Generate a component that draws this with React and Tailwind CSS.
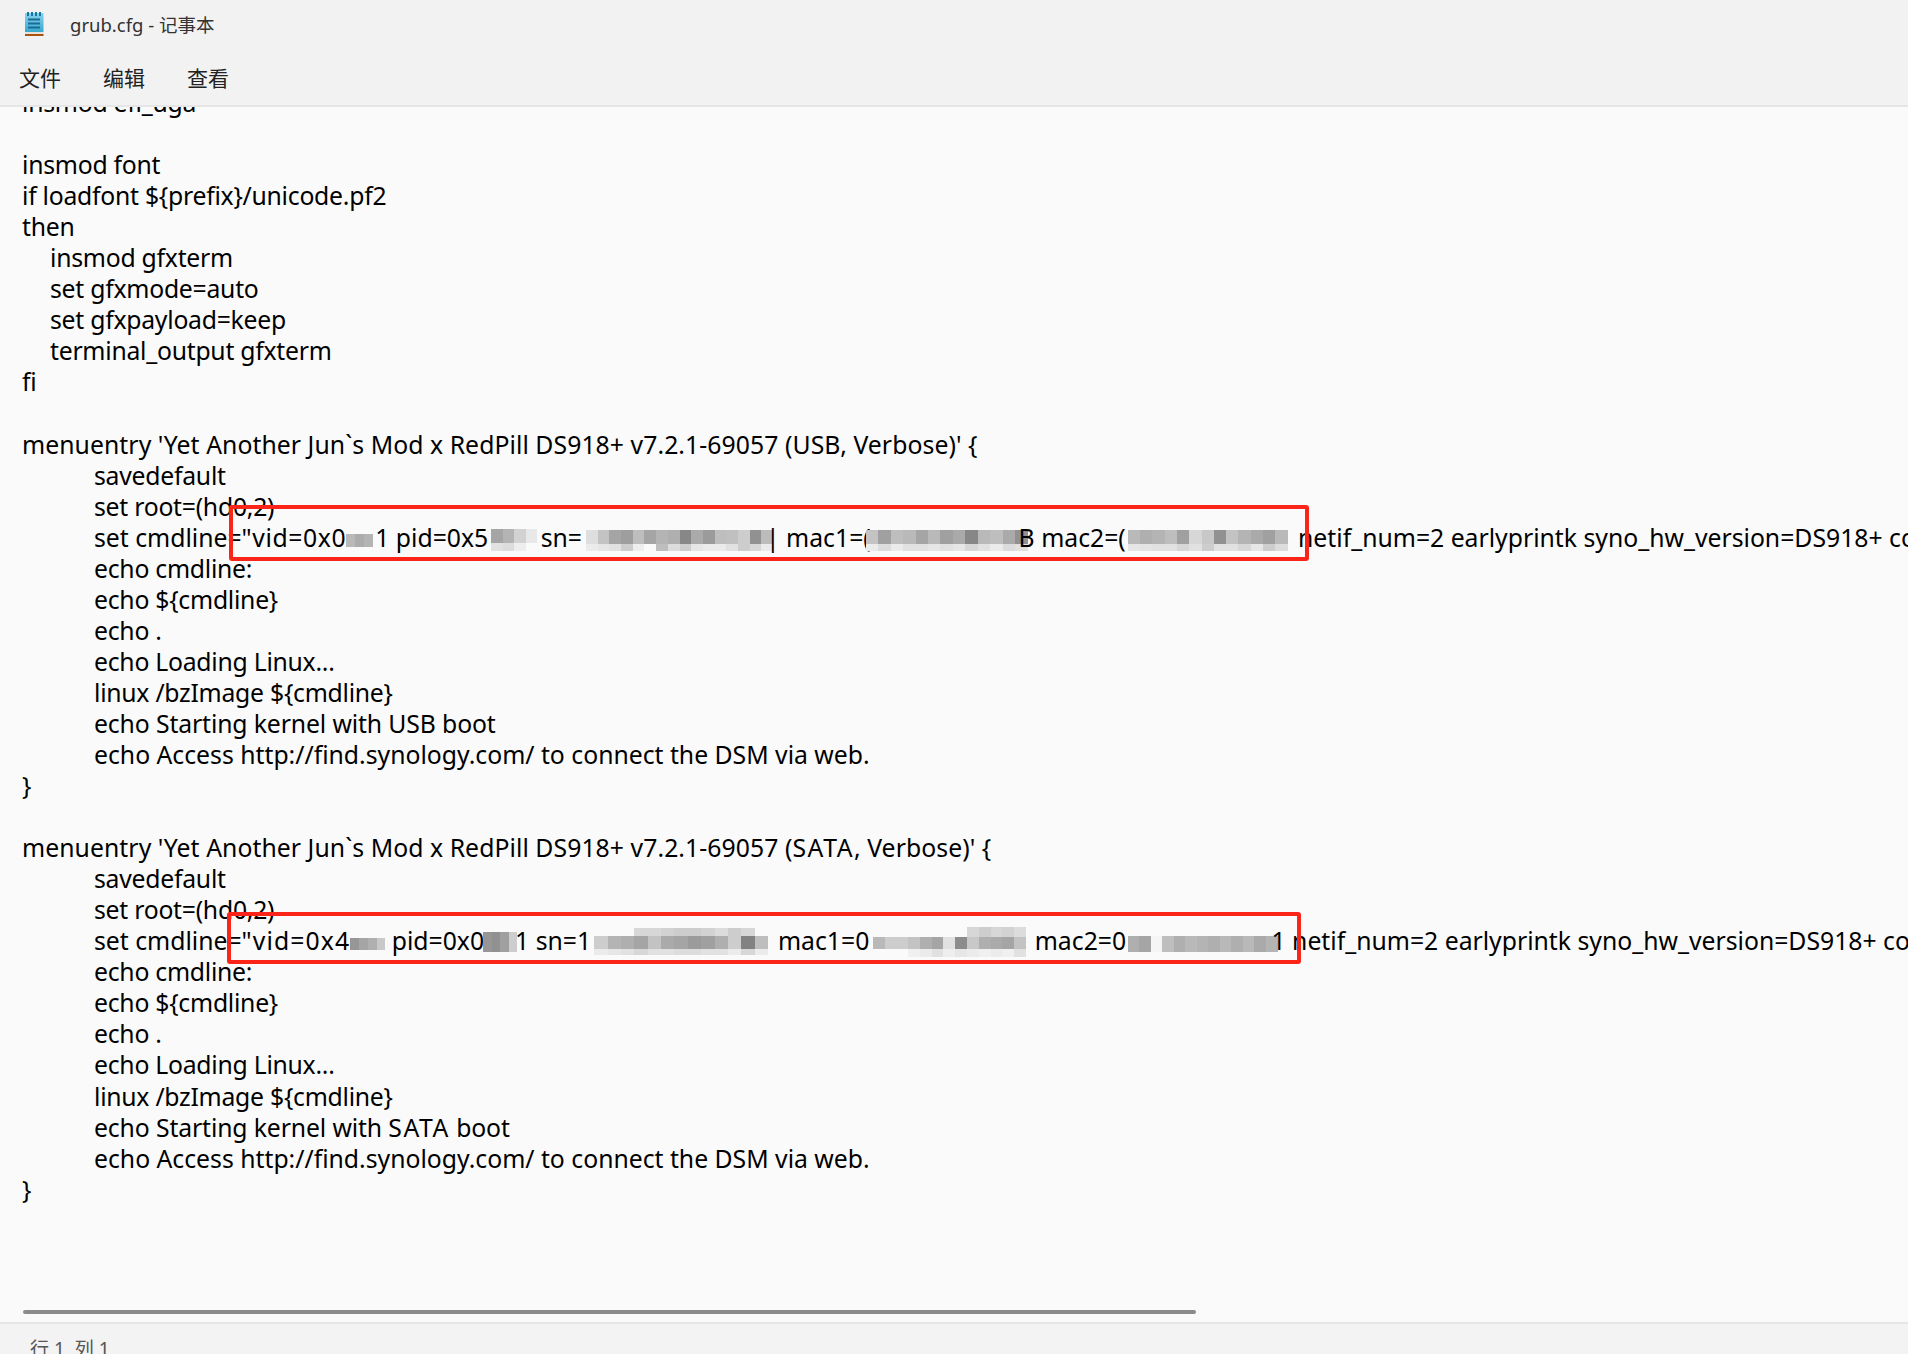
const TEXT_FONT = "font-['Noto_Sans','Noto_Sans_CJK_SC',sans-serif]"

// blurred-out part of a line: a grid of grey cells sitting in the text flow
function Mosaic({ cells, width, rows, className = "" }) {
  const size = width / cells[0].length
  return (
    <span
      className={`inline-grid align-middle ${className}`}
      style={{ gridTemplateColumns: `repeat(${cells[0].length}, ${size}px)`, gridTemplateRows: rows }}
    >
      {cells.flat().map((c, i) => (
        <span key={i} style={{ background: c }} />
      ))}
    </span>
  )
}

const g = (...v) => v.map((n) => (n === 0 ? "transparent" : `rgb(${n},${n},${n})`))

const blurs = {
  a1: [g(185, 172, 180)],
  a2: [g(165, 180, 210, 232), g(225, 220, 238, 0)],
  a3: [
    g(222, 195, 165, 158, 190, 165, 180, 175, 135, 170, 155, 190, 192, 205, 145, 188),
    g(235, 230, 225, 205, 238, 250, 190, 220, 205, 230, 235, 235, 225, 205, 215, 235),
  ],
  a4: [
    g(195, 160, 190, 185, 165, 185, 160, 170, 135, 185, 190, 170, 145),
    g(235, 220, 235, 225, 225, 230, 225, 230, 215, 225, 235, 220, 225),
  ],
  a5: [
    g(185, 175, 180, 190, 160, 215, 200, 145, 195, 180, 170, 160, 185),
    g(230, 228, 225, 225, 215, 225, 205, 225, 225, 215, 230, 205, 220),
  ],
  b1: [g(150, 165, 175, 200)],
  b2: [g(150, 145, 160, 205)],
  b3: [
    g(0, 0, 0, 215, 215, 210, 205, 205, 210, 220, 205, 215, 0),
    g(205, 180, 175, 165, 195, 170, 165, 155, 160, 175, 205, 130, 190),
    g(235, 230, 225, 215, 225, 225, 220, 220, 225, 225, 235, 215, 235),
  ],
  b4: [
    g(0, 0, 0, 0, 0, 0, 0, 0, 215, 205, 215, 210, 220),
    g(185, 205, 205, 195, 175, 165, 225, 140, 200, 175, 170, 165, 195),
    g(0, 0, 0, 240, 235, 225, 238, 230, 235, 240, 235, 240, 225),
  ],
  b5: [g(175, 165, 245, 190, 175, 185, 180, 175, 185, 175, 185, 170, 180)],
}

const before = [
  "insmod efi_uga",
  "",
  "insmod font",
  "if loadfont ${prefix}/unicode.pf2",
  "then",
  "   insmod gfxterm",
  "   set gfxmode=auto",
  "   set gfxpayload=keep",
  "   terminal_output gfxterm",
  "fi",
  "",
]

function Line({ children, className = "tracking-[-0.25px]" }) {
  return <div className={`h-[31.05px] ${className}`}>{children}</div>
}

function Entry({ kind, children }) {
  const after = [
    "\techo cmdline:",
    "\techo ${cmdline}",
    "\techo .",
    "\techo Loading Linux...",
    "\tlinux /bzImage ${cmdline}",
  ]
  const kindLabel = <span className={kind === "SATA" ? "tracking-[1.5px]" : ""}>{kind}</span>
  return (
    <>
      <Line className="tracking-[0.07px]">
        {"menuentry 'Yet Another Jun`s Mod x RedPill DS918+ v7.2.1-69057 ("}
        {kindLabel}
        {", Verbose)' {"}
      </Line>
      <Line>{"\tsavedefault"}</Line>
      <Line>{"\tset root=(hd0,2)"}</Line>
      <Line className="">{children}</Line>
      {after.map((l, i) => (
        <Line key={i}>{l}</Line>
      ))}
      <Line className="tracking-[-0.12px]">
        {"\techo Starting kernel with "}
        {kindLabel}
        {" boot"}
      </Line>
      <Line className="">{"\techo Access http://find.synology.com/ to connect the DSM via web."}</Line>
      <Line>{"}"}</Line>
      <Line />
    </>
  )
}

export default function App() {
  return (
    <div className={`${TEXT_FONT} relative flex h-[1354px] w-[1908px] flex-col overflow-hidden bg-[#fafafa] text-black`}>
      <div className="flex h-[52px] shrink-0 items-center bg-[#f2f2f2] pl-[25px]">
        <svg width="20" height="24" viewBox="0 0 20 24" className="-mt-[4px]">
          <defs>
            <linearGradient id="pad" x1="0" y1="0" x2="0" y2="1">
              <stop offset="0" stopColor="#86d3f0" />
              <stop offset="1" stopColor="#38a9cc" />
            </linearGradient>
          </defs>
          <rect x="0" y="1" width="18.5" height="19" fill="url(#pad)" />
          <path d="M3 0v4M7 0v4M11 0v4M15 0v4" stroke="#17779f" strokeWidth="2" />
          <path d="M3 7.5h12M3 11.5h12M3 15.5h12" stroke="#1b6b96" strokeWidth="2" />
          <rect x="0" y="20" width="18.5" height="2" fill="#e9e2da" />
          <rect x="0" y="22" width="18.5" height="2" fill="#a8520f" />
        </svg>
        <span className="ml-[25px] -mt-[2px] text-[18.5px] text-[#333]">grub.cfg - 记事本</span>
      </div>
      <div className="flex h-[55px] shrink-0 items-center gap-[42px] border-b-2 border-[#e6e6e6] bg-[#f2f2f2] pl-[19px] text-[21px] text-[#222]">
        <span>文件</span>
        <span>编辑</span>
        <span>查看</span>
      </div>

      <div className="min-h-0 flex-1 overflow-hidden">
        <div className="-mt-[20px] whitespace-pre pl-[22px] text-[24.75px] leading-[31.05px] [tab-size:72px]">
          {before.map((l, i) => (
            <Line key={i}>
              {l.startsWith("   ") ? <span className="pl-[28px]">{l.trim()}</span> : l}
            </Line>
          ))}
          <Entry kind="USB">
            {"\tset cmdline="}
            <span className="tracking-[0.6px]">{'"vid=0x0'}</span>
            <Mosaic cells={blurs.a1} width={27} rows="13px" className="mr-[2px]" />
            {"1 pid=0x5"}
            <Mosaic cells={blurs.a2} width={46} rows="14px 8px" className="ml-[3px] -mr-[3px]" />
            {" sn="}
            <Mosaic cells={blurs.a3} width={187} rows="14px 7px" className="ml-[4px] -mr-[7px]" />
            {"| mac1=("}
            <Mosaic cells={blurs.a4} width={162} rows="14px 7px" className="-ml-[5px] -mr-[9px]" />
            {"B mac2=("}
            <Mosaic cells={blurs.a5} width={160} rows="14px 7px" className="ml-[2px] mr-[4px]" />
            {" netif_num=2 earlyprintk syno_hw_version=DS918+ console"}
          </Entry>
          <Entry kind="SATA">
            {"\tset cmdline="}
            <span className="tracking-[1.1px]">{'"vid=0x4'}</span>
            <Mosaic cells={blurs.b1} width={35} rows="12px" />
            {" pid=0x0"}
            <Mosaic cells={blurs.b2} width={34} rows="20px" className="relative -top-[2px] -ml-[1px] -mr-[2px]" />
            {"1 sn=1"}
            <Mosaic cells={blurs.b3} width={174} rows="8px 13px 6px" className="relative -top-[2px] ml-[3px] mr-[3.5px]" />
            {" mac1=0"}
            <Mosaic cells={blurs.b4} width={153} rows="10px 12px 8px" className="relative -top-[2px] ml-[3.5px] mr-[2.5px]" />
            {" mac2=0"}
            <Mosaic cells={blurs.b5} width={150} rows="16px" className="ml-[1.5px] -mr-[6px]" />
            {"1 netif_num=2 earlyprintk syno_hw_version=DS918+ console"}
          </Entry>
        </div>
      </div>

      <div className="flex h-[32px] shrink-0 border-t-2 border-[#e6e6e6] bg-[#f3f3f3] pl-[30px] pt-[10px] text-[19px] leading-[30px] text-[#555]">
        行 1, 列 1
      </div>

      {/* horizontal scrollbar thumb */}
      <div className="absolute left-[23px] top-[1310px] h-[4px] w-[1173px] rounded-full bg-[#8b8b8b]" />

      {/* red annotation boxes */}
      <div className="absolute left-[229px] top-[505px] h-[56px] w-[1080px] rounded-[3px] border-[4px] border-[#fb2419]" />
      <div className="absolute left-[227px] top-[912px] h-[52px] w-[1074px] rounded-[3px] border-[4px] border-[#fb2419]" />
    </div>
  )
}
